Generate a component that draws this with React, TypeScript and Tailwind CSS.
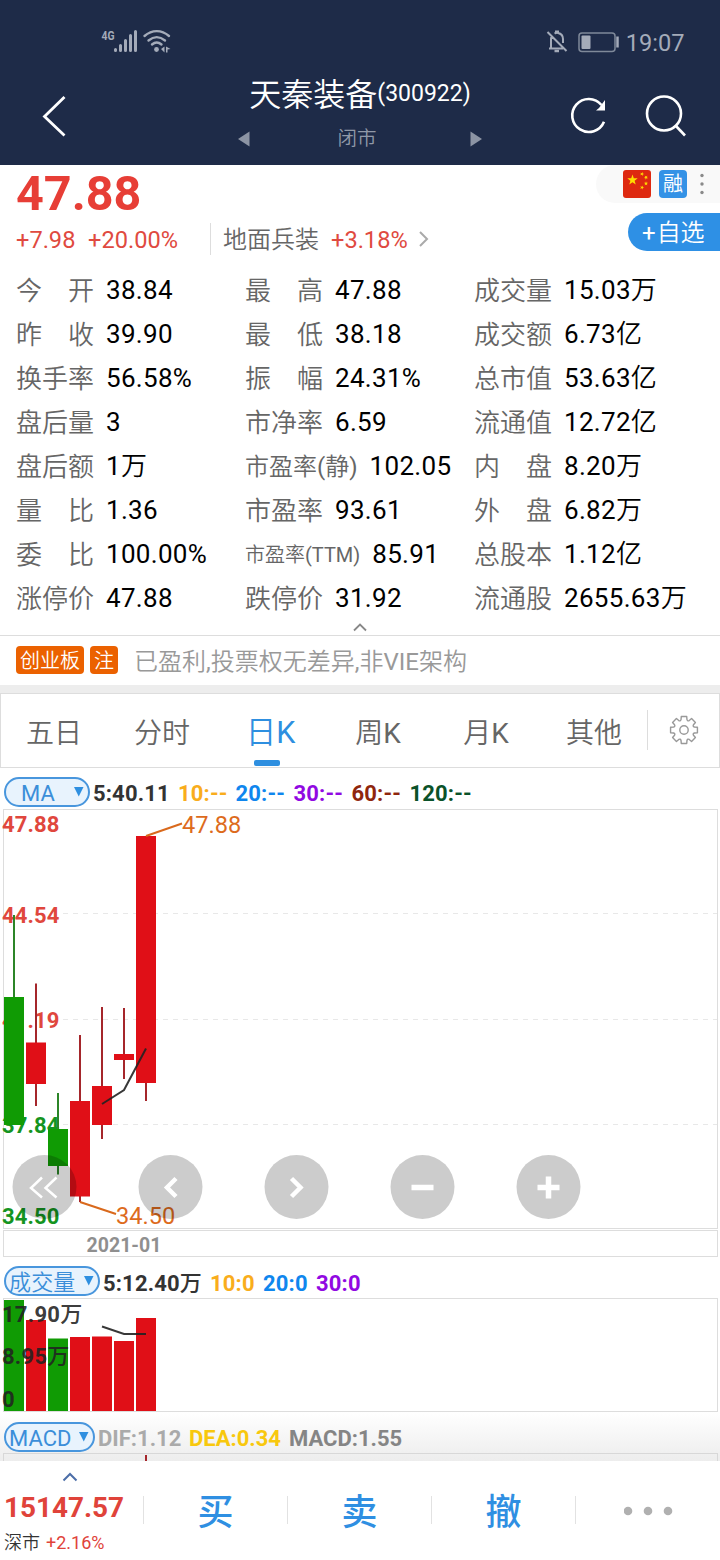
import React from "react";

type Quote = { label: string; value: string; size?: string };

const QUOTES: Quote[][] = [
  [
    { label: "今开", value: "38.84" },
    { label: "昨收", value: "39.90" },
    { label: "换手率", value: "56.58%" },
    { label: "盘后量", value: "3" },
    { label: "盘后额", value: "1万" },
    { label: "量比", value: "1.36" },
    { label: "委比", value: "100.00%" },
    { label: "涨停价", value: "47.88" },
  ],
  [
    { label: "最高", value: "47.88" },
    { label: "最低", value: "38.18" },
    { label: "振幅", value: "24.31%" },
    { label: "市净率", value: "6.59" },
    { label: "市盈率(静)", value: "102.05", size: "text-[24px]" },
    { label: "市盈率", value: "93.61" },
    { label: "市盈率(TTM)", value: "85.91", size: "text-[20px]" },
    { label: "跌停价", value: "31.92" },
  ],
  [
    { label: "成交量", value: "15.03万" },
    { label: "成交额", value: "6.73亿" },
    { label: "总市值", value: "53.63亿" },
    { label: "流通值", value: "12.72亿" },
    { label: "内盘", value: "8.20万" },
    { label: "外盘", value: "6.82万" },
    { label: "总股本", value: "1.12亿" },
    { label: "流通股", value: "2655.63万" },
  ],
];

const TABS = ["五日", "分时", "日K", "周K", "月K", "其他"];

const RED = "#e00f17";
const GREEN = "#109b04";

const CANDLES = [
  { x: 4, top: 997, bottom: 1125, high: 915, low: 1125, up: false, volume: 1300 },
  { x: 26, top: 1042.5, bottom: 1084, high: 983.5, low: 1106, up: true, volume: 1320 },
  { x: 48, top: 1129, bottom: 1166, high: 1093, low: 1174.5, up: false, volume: 1338.5 },
  { x: 70, top: 1101, bottom: 1196.5, high: 1035, low: 1202, up: true, volume: 1337 },
  { x: 92, top: 1086, bottom: 1125, high: 1007, low: 1139, up: true, volume: 1336.5 },
  { x: 114, top: 1054, bottom: 1060, high: 1008, low: 1079, up: true, volume: 1341 },
  { x: 136, top: 836, bottom: 1083, high: 836, low: 1101, up: true, volume: 1318 },
];

/** Sets Chinese runs in the demi-light cut and leaves Latin runs in Roboto. */
function Mixed({ text }: { text: string }) {
  const runs = text.match(/[\u4e00-\u9fff]+|[^\u4e00-\u9fff]+/g) ?? [];
  return (
    <>
      {runs.map((run, i) => (
        <span key={i} className={/[\u4e00-\u9fff]/.test(run) ? "font-['Roboto','Noto_Sans_CJK_SC_DemiLight','Noto_Sans_CJK_SC',sans-serif] font-[350]" : ""}>
          {run}
        </span>
      ))}
    </>
  );
}

function StatusBar() {
  return (
    <div className="flex h-[82px] items-start pl-[100px] pr-[35.500px]">
      <svg className="mt-[28px]" width="74" height="26" viewBox="0 0 74 26" fill="none" stroke="#a4abb9">
        <text x="1.5" y="12" fontSize="13.500" fontWeight="700" fill="#a4abb9" stroke="none" textLength="13" lengthAdjust="spacingAndGlyphs">4G</text>
        <g strokeWidth="3" strokeLinecap="round">
          <path d="M15.5 21.5v1M20.5 17.5v5M25.5 12.5v10M30.5 7.500v15M35.500 3.500v19" />
        </g>
        <g strokeWidth="2.400" strokeLinecap="round">
          <path d="M44.500 8C52 1.500 61.500 1.500 69 8" />
          <path d="M48.500 12.500C54 8 59.500 8 65 12.500" />
          <path d="M52 16.500c3-2.600 6.500-2.600 9.500 0" />
        </g>
        <circle cx="56.500" cy="21.500" r="2.400" fill="#a4abb9" stroke="none" />
        <path d="M61 21l3.500-2.500v6zM66 18.500l4.500 2.500-3 .5v3H66z" fill="#a4abb9" stroke="none" />
      </svg>
      <div className="flex-1" />
      <svg className="mt-[28px]" width="24" height="26" viewBox="0 0 24 26" fill="none" stroke="#a4abb9" strokeWidth="2">
        <path d="M2.500 4 21.500 23M4 20.500h14M6 20V11c0-1.500.4-2.600 1-3.500M9.500 5.500c.5-.3 1-.5 1.500-.6V3.500h2v1.400c3 .6 5 3 5 6V15" />
        <path d="M9.500 23h4.500" strokeWidth="2.500" />
      </svg>
      <svg className="ml-[9px] mt-[30px]" width="42" height="24" viewBox="0 0 42 24" fill="none">
        <rect x="1" y="3" width="36" height="18.500" rx="3" stroke="#7f8999" strokeWidth="1.500" />
        <rect x="3.500" y="5.500" width="9" height="13.500" rx="1" fill="#a4abb9" />
        <path d="M39.500 6.500v11" stroke="#a4abb9" strokeWidth="2.500" />
      </svg>
      <div className="ml-[6px] mt-[27px] h-[32px] text-[23.600px] leading-[32px] text-[#a4abb9]">19:07</div>
    </div>
  );
}

function Header() {
  return (
    <div className="flex h-[83px] justify-between pl-[42px] pr-[32px]">
      <svg className="mt-[12px]" width="26" height="44" viewBox="0 0 26 44" fill="none" stroke="#fff" strokeWidth="2.800">
        <path d="M22.500 3 2.500 22.500 22.500 41.500" />
      </svg>
      <div className="ml-[84px] mt-[-9px] flex w-[244px] flex-col items-center">
        <div className="flex h-[44px] items-start whitespace-nowrap text-white">
          <span className="text-[32px] leading-[44px]"><Mixed text="天秦装备" /></span>
          <span className="text-[23px] leading-[42px]">(300922)</span>
        </div>
        <div className="mt-[8px] flex h-[28px] w-full items-center justify-between">
          <svg width="12" height="16" viewBox="0 0 12 16"><path d="M0 8 11.500.500v15z" fill="#8c94a4" /></svg>
          <span className="ml-[-6px] text-[19.500px] leading-[28px] text-[#9199a8]"><Mixed text="闭市" /></span>
          <svg width="12" height="16" viewBox="0 0 12 16"><path d="M12 8 .500.500v15z" fill="#8c94a4" /></svg>
        </div>
      </div>
      <div className="mt-[12px] flex gap-[34px]">
        <svg width="42" height="42" viewBox="0 0 42 42" fill="none" stroke="#fff" strokeWidth="2.600">
          <path d="M36 27.700A16.500 16.500 0 1 1 33.500 11" />
          <path d="M37 6v10.500H28l3-2.500z" fill="#fff" stroke="none" />
        </svg>
        <svg width="44" height="44" viewBox="0 0 44 44" fill="none" stroke="#fff" strokeWidth="2.600">
          <circle cx="20" cy="19.500" r="17" />
          <path d="M31.500 31.500 41 41.500" />
        </svg>
      </div>
    </div>
  );
}

function Star({ x, y, r, rotate = 0 }: { x: number; y: number; r: number; rotate?: number }) {
  const points = Array.from({ length: 10 }, (_, i) => {
    const radius = i % 2 === 0 ? r : r * 0.4;
    const angle = (Math.PI / 5) * i - Math.PI / 2;
    return `${radius * Math.cos(angle)},${radius * Math.sin(angle)}`;
  }).join(" ");
  return <polygon points={points} transform={`translate(${x} ${y}) rotate(${rotate})`} fill="#ffde00" />;
}

function Summary() {
  return (
    <div className="flex h-[103px] justify-between">
      <div className="flex flex-col pl-[16px]">
        <div className="h-[56px] text-[48.500px] font-bold leading-[58px] text-[#e73e36]">47.88</div>
        <div className="mt-px flex h-[36px] items-center text-[23.600px] leading-[36px] text-[#e04a40]">
          <span className="w-[72px]">+7.98</span>
          <span className="w-[122px]">+20.00%</span>
          <span className="mt-[-2px] h-[32px] w-px bg-[#ddd]" />
          <span className="ml-[12px] w-[108px] text-[24px] text-[#666]"><Mixed text="地面兵装" /></span>
          <span>+3.18%</span>
          <svg className="ml-[10px] mt-[-3px]" width="12" height="18" viewBox="0 0 12 18" fill="none" stroke="#aaa" strokeWidth="2">
            <path d="m2 2 7 7-7 7" />
          </svg>
        </div>
      </div>
      <div className="flex flex-col items-end">
        <div className="flex h-[38px] w-[124px] items-center rounded-l-full bg-[#f9f9f9] pl-[27px]">
          <svg width="28" height="28" viewBox="0 0 28 28">
            <rect width="28" height="28" rx="3" fill="#de2910" />
            <Star x={9.500} y={10} r={5.500} />
            <Star x={19} y={4} r={2.200} rotate={20} />
            <Star x={23} y={7.500} r={2.200} rotate={40} />
            <Star x={23} y={13.500} r={2.200} />
            <Star x={19} y={17.500} r={2.200} rotate={20} />
          </svg>
          <div className="ml-[8px] flex h-[28px] w-[28px] items-center justify-center rounded-[4px] bg-[#3492e6] text-[20px] leading-[28px] text-white">融</div>
          <svg className="ml-[13px]" width="4" height="22" viewBox="0 0 4 22" fill="#8a8a8a">
            <circle cx="2" cy="2.500" r="1.700" /><circle cx="2" cy="11" r="1.700" /><circle cx="2" cy="19.500" r="1.700" />
          </svg>
        </div>
        <div className="mt-[10px] h-[38px] w-[92px] rounded-l-full bg-[#2e90e5] pl-[14px] text-[24px] leading-[40px] text-white">
          <span>+</span><span className="ml-[1px]"><Mixed text="自选" /></span>
        </div>
      </div>
    </div>
  );
}

function QuoteGrid() {
  return (
    <div className="grid h-[352px] grid-cols-[229px_229px_1fr] pl-[16px] pt-px">
      {QUOTES.map((column, i) => (
        <div key={i} className="flex flex-col">
          {column.map((q) => (
            <div key={q.label} className="flex h-[44px] whitespace-nowrap leading-[44px]">
              {q.size ? (
                <span className={`${q.size} text-[#666]`}><Mixed text={q.label} /></span>
              ) : (
                <span className="flex w-[78px] justify-between text-[26px] text-[#666]">
                  {q.label.split("").map((c) => <Mixed key={c} text={c} />)}
                </span>
              )}
              <span className="ml-[12px] text-[26px] leading-[42px] tracking-[0.3px] text-black"><Mixed text={q.value} /></span>
            </div>
          ))}
        </div>
      ))}
    </div>
  );
}

function Notice() {
  return (
    <div>
      <div className="flex h-[15px] justify-center pt-[3px]">
        <svg width="14" height="9" viewBox="0 0 14 9" fill="none" stroke="#888" strokeWidth="1.800"><path d="m1 7.500 6-6 6 6" /></svg>
      </div>
      <div className="flex h-[50px] items-start border-t border-[#ddd] pl-[16px] pt-[10px]">
        <span className="h-[28px] w-[68px] rounded-[4px] bg-[#eb6100] text-center text-[20px] leading-[31px] text-white"><Mixed text="创业板" /></span>
        <span className="ml-[6px] h-[28px] w-[28px] rounded-[4px] bg-[#eb6100] text-center text-[20px] leading-[31px] text-white"><Mixed text="注" /></span>
        <span className="ml-[16px] text-[24px] leading-[33px] text-[#999]"><Mixed text="已盈利,投票权无差异,非VIE架构" /></span>
      </div>
      <div className="h-[8px] bg-[#ededed]" />
    </div>
  );
}

function Gear() {
  const teeth = Array.from({ length: 8 }, (_, i) => {
    const a = (i * Math.PI) / 4;
    const p = (r: number, d: number) =>
      `${(15 + r * Math.sin(a + d)).toFixed(2)} ${(15 - r * Math.cos(a + d)).toFixed(2)}`;
    return `${i === 0 ? "M" : "L"}${p(10.800, -0.280)}L${p(13.700, -0.200)}L${p(13.700, 0.200)}L${p(10.800, 0.280)}Q${p(9.300, 0.393)} ${p(10.800, 0.505)}`;
  }).join("");
  return (
    <svg width="30" height="30" viewBox="0 0 30 30" fill="none" stroke="#999" strokeWidth="1.400" strokeLinejoin="round">
      <path d={`${teeth}Z`} />
      <circle cx="15" cy="15" r="4.200" />
    </svg>
  );
}

function Tabs() {
  return (
    <div className="flex h-[75px] items-center border border-[#ddd]">
      {TABS.map((tab) => {
        const active = tab === "日K";
        return (
          <div key={tab} className="flex h-[73px] w-[108px] shrink-0 flex-col items-center pr-[2px]">
            <span className={active ? "h-[66px] pl-[1px] text-[30.500px] leading-[78px] text-[#2e8fe0]" : "h-[66px] text-[28px] leading-[80px] text-[#666]"}>
              <Mixed text={tab} />
            </span>
            {active && <span className="mr-[7px] h-[6px] w-[26px] rounded-[2px] bg-[#2e8fe0]" />}
          </div>
        );
      })}
      <div className="ml-[-2px] mt-[-1px] h-[40px] w-px bg-[#ddd]" />
      <div className="ml-[21px] mt-[-2px]"><Gear /></div>
    </div>
  );
}

function Pill({ label, width, pad }: { label: string; width: string; pad: string }) {
  return (
    <div className={`flex h-[30px] items-center justify-between rounded-full border-2 border-[#4896dd] bg-[#e8f3fd] ${width} ${pad}`}>
      <span className="mt-[4px] text-[22px] font-normal leading-[30px] text-[#3b8ed9]"><Mixed text={label} /></span>
      <svg width="10" height="10" viewBox="0 0 10 10"><path d="M0 0h9.500L4.750 9.500z" fill="#2e8fe0" /></svg>
    </div>
  );
}

function MaRow() {
  return (
    <div className="flex h-[41px] items-center pl-[4px] text-[22px] font-bold leading-[34px] tracking-[0.15px]">
      <div className="mt-[6px]"><Pill label="MA" width="w-[86px]" pad="pl-[15px] pr-[4px]" /></div>
      <div className="ml-[3px] mt-[11px] flex whitespace-nowrap">
        <span className="w-[85px] text-[#333]">5:40.11</span>
        <span className="w-[57.500px] text-[#f9ad1c]">10:--</span>
        <span className="w-[58px] text-[#0f86ee]">20:--</span>
        <span className="w-[58px] text-[#9109e2]">30:--</span>
        <span className="w-[58px] text-[#8f260d]">60:--</span>
        <span className="text-[#0a5229]">120:--</span>
      </div>
    </div>
  );
}

function PriceChart() {
  return (
    <svg width="720" height="448" viewBox="0 809 720 448" className="block" fill="none">
      <rect x="3.500" y="809.500" width="714" height="419" stroke="#ddd" />
      <rect x="3.500" y="1230.500" width="714" height="26" stroke="#ddd" />
      <path d="M63 913.500H717M63 1019.500H717M63 1124.500H717" stroke="#e8e8e8" strokeDasharray="5 5" />
      <g fontSize="22" fontWeight="700" fill="#e0473d" letterSpacing=".15">
        <text x="2" y="832">47.88</text>
        <text x="2" y="923">44.54</text>
        <text x="2" y="1028">41.19</text>
        <text x="2" y="1133" fill="#149421">37.84</text>
      </g>
      {CANDLES.map((c) => (
        <g key={c.x}>
          <path d={`M${c.x + 10} ${c.high}V${c.low}`} stroke={c.up ? "#a5262b" : "#2c8528"} strokeWidth="2" />
          <rect x={c.x} y={c.top} width="20" height={c.bottom - c.top} fill={c.up ? RED : GREEN} />
        </g>
      ))}
      <text x="2" y="1224" fontSize="22" fontWeight="700" letterSpacing=".15" fill="#149421">34.50</text>
      <path d="M102 1104 124 1090 146 1048.500" stroke="#222" strokeOpacity=".9" strokeWidth="2" />
      <path d="M146 836 182 823.500M80 1202 116 1214" stroke="#d9691c" strokeWidth="2" />
      <g fontSize="23.600" fill="#dd6b1d">
        <text x="182" y="833">47.88</text>
        <text x="116" y="1224">34.50</text>
      </g>
      <text x="124" y="1252" fontSize="19.500" fontWeight="700" fill="#8f8f8f" textAnchor="middle">2021-01</text>
      <g fill="#000" fillOpacity=".2">
        {[44.5, 170.5, 296.5, 422.5, 548.5].map((x) => <circle key={x} cx={x} cy="1187" r="32" />)}
      </g>
      <g stroke="#fff">
        <path d="M42 1177.500 31 1188 42 1197.500M56.500 1177.500 45.500 1188 56.500 1197.500" strokeWidth="2.500" />
        <path d="M176 1178.500 167 1187.500 176 1196.500M291.500 1178.500 300.500 1187.500 291.500 1196.500" strokeWidth="4.500" />
        <path d="M411.500 1187.500h22M537.500 1187.500h22M548.500 1176.500v22" strokeWidth="5.500" />
      </g>
    </svg>
  );
}

function VolumeRow() {
  return (
    <div className="flex h-[41px] items-center pl-[4px] text-[22px] font-bold leading-[34px] tracking-[0.15px]">
      <div className="mt-[7px]"><Pill label="成交量" width="w-[96px]" pad="pl-[3px] pr-[4px]" /></div>
      <div className="ml-[3px] mt-[12px] flex whitespace-nowrap">
        <span className="w-[107px] text-[#333]">5:12.40<span className="font-medium">万</span></span>
        <span className="w-[53px] text-[#f9ad1c]">10:0</span>
        <span className="w-[53px] text-[#0f86ee]">20:0</span>
        <span className="text-[#9109e2]">30:0</span>
      </div>
    </div>
  );
}

function VolumeChart() {
  return (
    <svg width="720" height="114" viewBox="0 1298 720 114" className="block" fill="none">
      <rect x="3.500" y="1298.500" width="714" height="113" stroke="#ddd" />
      {CANDLES.map((c) => (
        <rect key={c.x} x={c.x} y={c.volume} width="20" height={1411 - c.volume} fill={c.up ? RED : GREEN} />
      ))}
      <path d="M102 1326.500 124 1334H146" stroke="#222" strokeOpacity=".9" strokeWidth="2" />
      <g fontSize="22" fontWeight="700" fill="#222" fillOpacity=".9" letterSpacing=".25">
        <text x="2" y="1322">17.90<tspan fontWeight="500">万</tspan></text>
        <text x="2" y="1364">8.95<tspan fontWeight="500">万</tspan></text>
        <text x="2" y="1407">0</text>
      </g>
    </svg>
  );
}

function MacdRow() {
  return (
    <div className="h-[49px] bg-gradient-to-b from-white to-[#ededed]">
      <div className="flex h-[41px] items-center pl-[4px] text-[22px] font-bold leading-[34px]">
        <div className="mt-[8px]"><Pill label="MACD" width="w-[91px]" pad="pl-[3px] pr-[4px]" /></div>
        <div className="ml-[3px] mt-[12px] flex whitespace-nowrap">
          <span className="w-[91px] text-[#aaa]">DIF:1.12</span>
          <span className="w-[100px] text-[#f8c80e]">DEA:0.34</span>
          <span className="text-[#858585]">MACD:1.55</span>
        </div>
      </div>
      <div className="mx-[3px] h-[8px] w-[715px] border border-b-0 border-[#d8d8d8] pl-[141px] pt-px">
        <div className="h-[6px] w-[2px] bg-[#a5262b]" />
      </div>
    </div>
  );
}

function TradeBar() {
  return (
    <div className="flex h-[99px] bg-white">
      <div className="flex w-[143px] flex-col whitespace-nowrap pl-[4px]">
        <svg className="ml-[58px] mt-[11px]" width="16" height="10" viewBox="0 0 16 10" fill="none" stroke="#4c6ea8" strokeWidth="2"><path d="m1.500 8.500 6.500-6.500 6.500 6.500" /></svg>
        <span className="mt-[10px] h-[32px] text-[27.900px] font-bold leading-[32px] text-[#e0433a]">15147.57</span>
        <span className="mt-[6px] flex gap-[6px] text-[18px] leading-[26px]">
          <span className="text-[#333]"><Mixed text="深市" /></span><span className="text-[#e0433a]">+2.16%</span>
        </span>
      </div>
      {["买", "卖", "撤"].map((action) => (
        <div key={action} className="flex w-[144px] items-start">
          <span className="mt-[35px] h-[28px] w-px bg-[#e2e2e2]" />
          <span className="mt-[28px] flex-1 text-center text-[36px] font-medium leading-[48px] text-[#2f8fe2]">{action}</span>
        </div>
      ))}
      <div className="flex flex-1 items-start">
        <span className="mt-[35px] h-[28px] w-px bg-[#e2e2e2]" />
        <svg className="ml-[48px] mt-[44px]" width="50" height="12" viewBox="0 0 50 12" fill="#b0b0b0">
          <circle cx="4" cy="6" r="4.300" /><circle cx="24" cy="6" r="4.300" /><circle cx="44" cy="6" r="4.300" />
        </svg>
      </div>
    </div>
  );
}

export default function App() {
  return (
    <div className="flex h-[1560px] w-[720px] flex-col overflow-hidden bg-white font-['Roboto','Noto_Sans_CJK_SC',sans-serif]" lang="zh-CN">
      <div className="h-[165px] bg-[#1e2b48]">
        <StatusBar />
        <Header />
      </div>
      <Summary />
      <QuoteGrid />
      <Notice />
      <Tabs />
      <MaRow />
      <PriceChart />
      <VolumeRow />
      <VolumeChart />
      <MacdRow />
      <TradeBar />
    </div>
  );
}
